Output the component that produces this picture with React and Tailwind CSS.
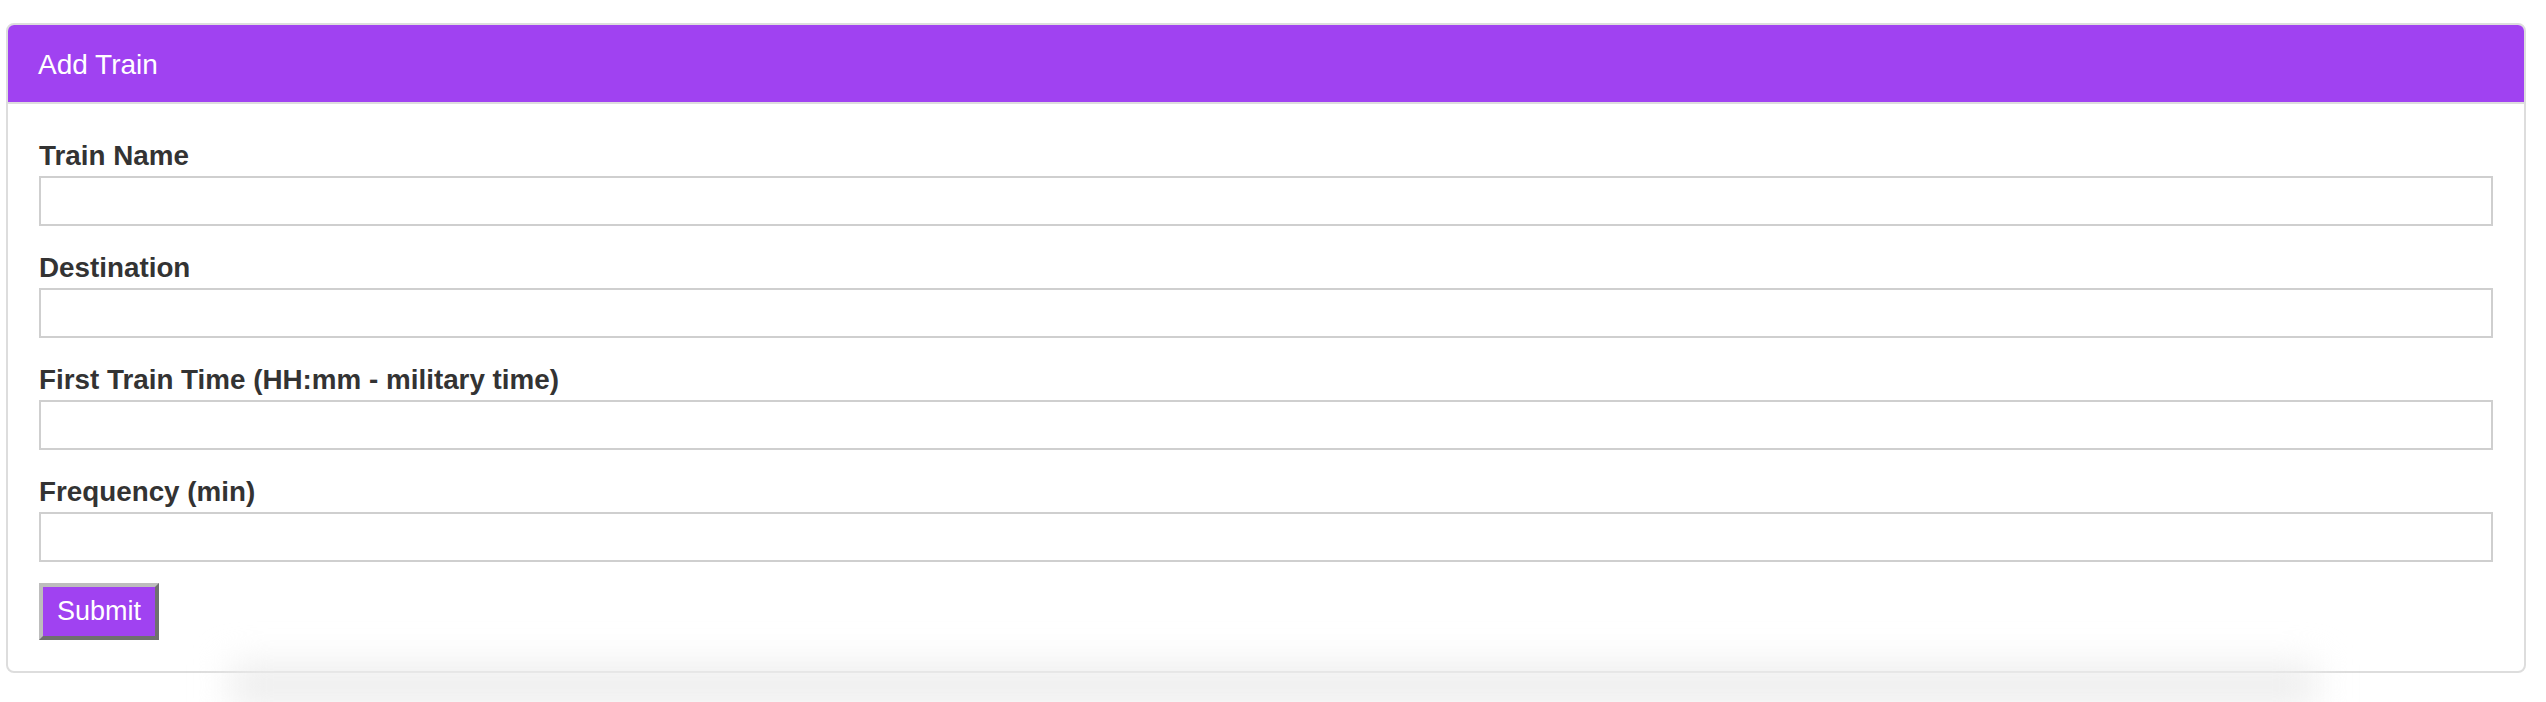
import React from 'react';

const fields = [
  { id: 'train-name', label: 'Train Name' },
  { id: 'destination', label: 'Destination' },
  { id: 'first-train', label: 'First Train Time (HH:mm - military time)' },
  { id: 'frequency', label: 'Frequency (min)' },
];

const App = () => {
  return (
    <div className="min-h-[702px] bg-white pt-[23px] font-['Liberation_Sans',Arial,sans-serif]">
      <div className="ml-[6px] w-[2520px] rounded-[8px] border-2 border-[#dddddd] bg-white overflow-hidden">
        <div className="h-[79px] bg-[#a042f1] px-[30px] border-b-2 border-[#dddddd] flex items-center">
          <h3 className="text-[28px] leading-none text-white pt-[2px]">Add Train</h3>
        </div>

        <form className="px-[31px] pt-[36px] pb-[31px]">
          {fields.map((f) => (
            <div key={f.id} className="mb-[26px] last-of-type:mb-[21px]">
              <label
                htmlFor={f.id}
                className="block text-[27.8px] font-bold leading-[31px] text-[#333333] mb-[5px]"
              >
                {f.label}
              </label>
              <input
                id={f.id}
                type="text"
                className="block w-full h-[50px] border-2 border-[#cfcfcf] bg-white px-3 outline-none"
              />
            </div>
          ))}
          <button
            type="submit"
            className="h-[57px] w-[120px] border-4 border-solid border-t-[#bdbdbd] border-l-[#bdbdbd] border-b-[#6f6f6f] border-r-[#6f6f6f] bg-[#a042f1] text-[27px] leading-none text-white"
          >
            Submit
          </button>
        </form>
      </div>
      <div className="mx-[230px] h-[40px] -mt-[8px] bg-[#ececec] blur-[18px]"></div>
    </div>
  );
};

export default App;
